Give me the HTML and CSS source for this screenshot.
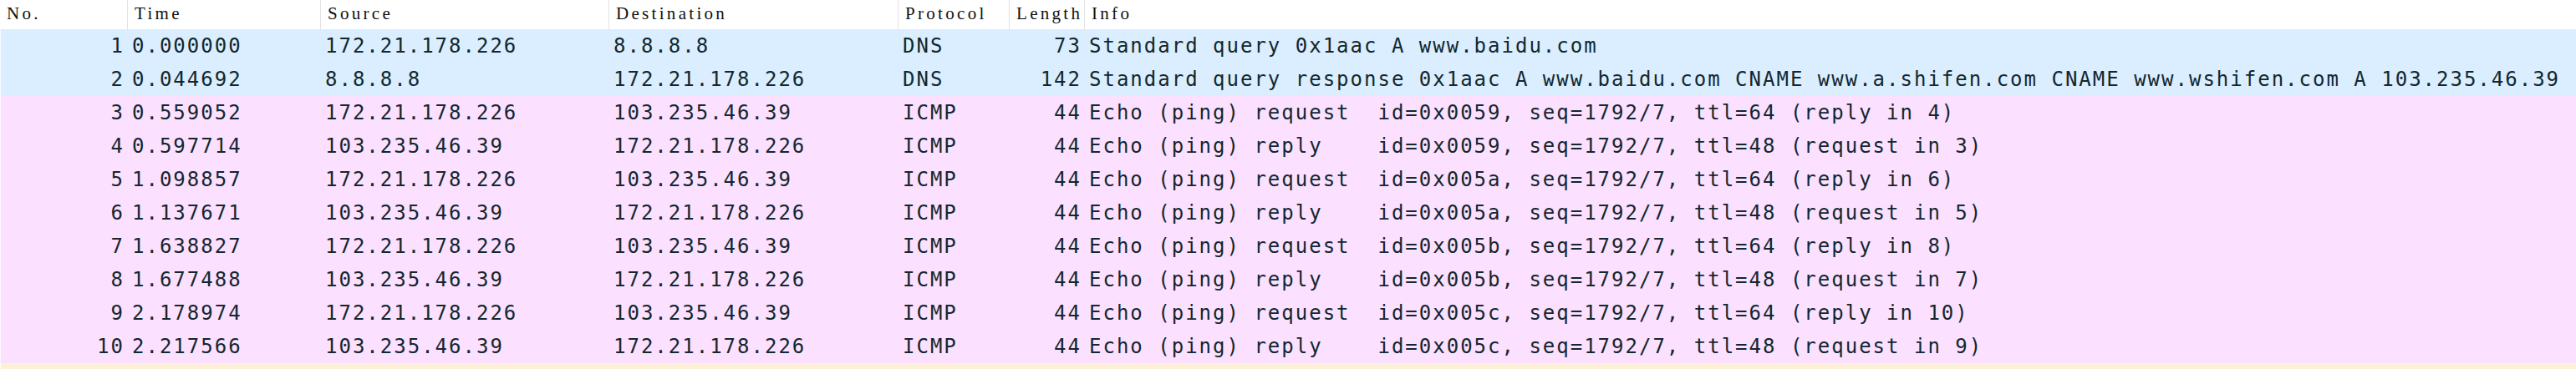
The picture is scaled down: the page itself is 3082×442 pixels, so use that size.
FILE: index.html
```html
<!DOCTYPE html>
<html lang="en">
<head>
<meta charset="utf-8">
<title>Packet list</title>
<link rel="stylesheet" href="styles.css">
</head>
<body>
<div class="packet-list">
  <div class="head">
    <div class="hcell">No.</div>
    <div class="hcell">Time</div>
    <div class="hcell">Source</div>
    <div class="hcell">Destination</div>
    <div class="hcell">Protocol</div>
    <div class="hcell">Length</div>
    <div class="hcell">Info</div>
  </div>
  <div class="row dns">
    <div class="cell num">1</div><div class="cell">0.000000</div><div class="cell">172.21.178.226</div><div class="cell">8.8.8.8</div><div class="cell">DNS</div><div class="cell num">73</div><div class="cell">Standard query 0x1aac A www.baidu.com</div>
  </div>
  <div class="row dns">
    <div class="cell num">2</div><div class="cell">0.044692</div><div class="cell">8.8.8.8</div><div class="cell">172.21.178.226</div><div class="cell">DNS</div><div class="cell num">142</div><div class="cell">Standard query response 0x1aac A www.baidu.com CNAME www.a.shifen.com CNAME www.wshifen.com A 103.235.46.39</div>
  </div>
  <div class="row icmp">
    <div class="cell num">3</div><div class="cell">0.559052</div><div class="cell">172.21.178.226</div><div class="cell">103.235.46.39</div><div class="cell">ICMP</div><div class="cell num">44</div><div class="cell">Echo (ping) request  id=0x0059, seq=1792/7, ttl=64 (reply in 4)</div>
  </div>
  <div class="row icmp">
    <div class="cell num">4</div><div class="cell">0.597714</div><div class="cell">103.235.46.39</div><div class="cell">172.21.178.226</div><div class="cell">ICMP</div><div class="cell num">44</div><div class="cell">Echo (ping) reply    id=0x0059, seq=1792/7, ttl=48 (request in 3)</div>
  </div>
  <div class="row icmp">
    <div class="cell num">5</div><div class="cell">1.098857</div><div class="cell">172.21.178.226</div><div class="cell">103.235.46.39</div><div class="cell">ICMP</div><div class="cell num">44</div><div class="cell">Echo (ping) request  id=0x005a, seq=1792/7, ttl=64 (reply in 6)</div>
  </div>
  <div class="row icmp">
    <div class="cell num">6</div><div class="cell">1.137671</div><div class="cell">103.235.46.39</div><div class="cell">172.21.178.226</div><div class="cell">ICMP</div><div class="cell num">44</div><div class="cell">Echo (ping) reply    id=0x005a, seq=1792/7, ttl=48 (request in 5)</div>
  </div>
  <div class="row icmp">
    <div class="cell num">7</div><div class="cell">1.638827</div><div class="cell">172.21.178.226</div><div class="cell">103.235.46.39</div><div class="cell">ICMP</div><div class="cell num">44</div><div class="cell">Echo (ping) request  id=0x005b, seq=1792/7, ttl=64 (reply in 8)</div>
  </div>
  <div class="row icmp">
    <div class="cell num">8</div><div class="cell">1.677488</div><div class="cell">103.235.46.39</div><div class="cell">172.21.178.226</div><div class="cell">ICMP</div><div class="cell num">44</div><div class="cell">Echo (ping) reply    id=0x005b, seq=1792/7, ttl=48 (request in 7)</div>
  </div>
  <div class="row icmp">
    <div class="cell num">9</div><div class="cell">2.178974</div><div class="cell">172.21.178.226</div><div class="cell">103.235.46.39</div><div class="cell">ICMP</div><div class="cell num">44</div><div class="cell">Echo (ping) request  id=0x005c, seq=1792/7, ttl=64 (reply in 10)</div>
  </div>
  <div class="row icmp">
    <div class="cell num">10</div><div class="cell">2.217566</div><div class="cell">103.235.46.39</div><div class="cell">172.21.178.226</div><div class="cell">ICMP</div><div class="cell num">44</div><div class="cell">Echo (ping) reply    id=0x005c, seq=1792/7, ttl=48 (request in 9)</div>
  </div>
  <div class="row other"></div>
</div>
</body>
</html>
```
FILE: styles.css
```css
html, body {
  margin: 0;
  padding: 0;
  background: #ffffff;
  overflow: hidden;
}

.packet-list {
  width: 3082px;
}

.head,
.row {
  display: grid;
  grid-template-columns: 152px 231px 345px 346px 133px 90px 1fr;
}

.head {
  height: 35px;
  background: #ffffff;
}

.hcell {
  font-family: "Liberation Serif", serif;
  font-size: 21px;
  letter-spacing: 3.3px;
  line-height: 32px;
  color: #111111;
  padding-left: 8px;
  white-space: pre;
  overflow: hidden;
}

.hcell + .hcell {
  border-left: 1px solid #e2e2e2;
  padding-left: 8px;
}

.row {
  height: 40px;
  box-shadow: inset 1px 0 0 rgba(255, 255, 255, 0.7);
}

.row.dns { background: #daeeff; }
.row.icmp { background: #fce0ff; }
.row.other {
  background: #fcf0d8;
  height: 7px;
}

.cell {
  font-family: "DejaVu Sans Mono", monospace;
  font-size: 24px;
  letter-spacing: 2px;
  line-height: 40px;
  color: #12272e;
  padding-left: 6px;
  white-space: pre;
  overflow: hidden;
}

.cell.num {
  text-align: right;
  padding-left: 0;
  padding-right: 3px;
}
```
